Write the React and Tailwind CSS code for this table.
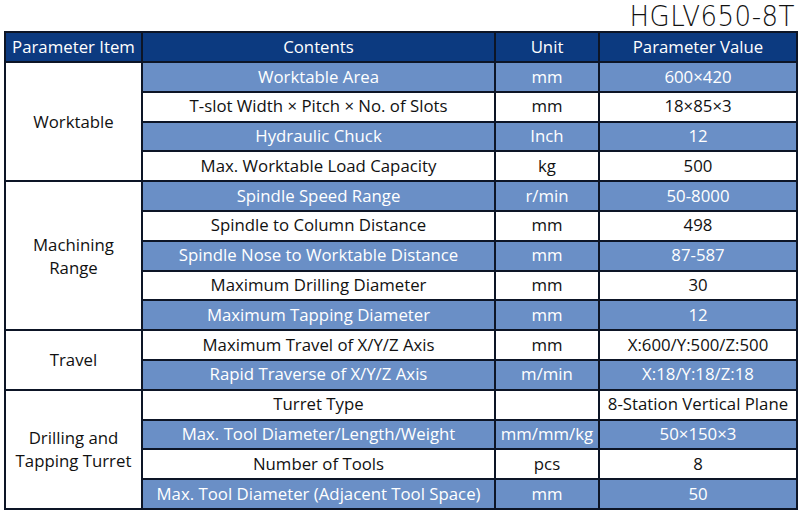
const groups = [
  {
    label: ["Worktable"],
    rows: [
      ["Worktable Area", "mm", "600×420"],
      ["T-slot Width × Pitch × No. of Slots", "mm", "18×85×3"],
      ["Hydraulic Chuck", "Inch", "12"],
      ["Max. Worktable Load Capacity", "kg", "500"],
    ],
  },
  {
    label: ["Machining", "Range"],
    rows: [
      ["Spindle Speed Range", "r/min", "50-8000"],
      ["Spindle to Column Distance", "mm", "498"],
      ["Spindle Nose to Worktable Distance", "mm", "87-587"],
      ["Maximum Drilling Diameter", "mm", "30"],
      ["Maximum Tapping Diameter", "mm", "12"],
    ],
  },
  {
    label: ["Travel"],
    rows: [
      ["Maximum Travel of X/Y/Z Axis", "mm", "X:600/Y:500/Z:500"],
      ["Rapid Traverse of X/Y/Z Axis", "m/min", "X:18/Y:18/Z:18"],
    ],
  },
  {
    label: ["Drilling and", "Tapping Turret"],
    rows: [
      ["Turret Type", "", "8-Station Vertical Plane"],
      ["Max. Tool Diameter/Length/Weight", "mm/mm/kg", "50×150×3"],
      ["Number of Tools", "pcs", "8"],
      ["Max. Tool Diameter (Adjacent Tool Space)", "mm", "50"],
    ],
  },
];

export default function App() {
  let index = 0;
  return (
    <div className="h-[512px] w-[800px] bg-white font-['Open_Sans','Noto_Sans',sans-serif] text-[16.8px] leading-none">
      <div className="flex h-[31px] items-start justify-end pr-[5px] pt-[3px]">
        <span className="origin-right font-['DejaVu_Sans',sans-serif] text-[28px] font-extralight leading-none tracking-[0.5px] text-[#111] [transform:scaleX(0.93)]">
          HGLV650-8T
        </span>
      </div>
      <table className="ml-[4px] w-[792px] table-fixed border-collapse text-center">
        <colgroup>
          <col className="w-[137px]" />
          <col className="w-[353px]" />
          <col className="w-[104px]" />
          <col className="w-[198px]" />
        </colgroup>
        <thead>
          <tr className="h-[30px] bg-[#0c3a80] text-white">
            <th className="border-2 border-[#0d1526] font-normal">Parameter Item</th>
            <th className="border-2 border-[#0d1526] font-normal">Contents</th>
            <th className="border-2 border-[#0d1526] font-normal">Unit</th>
            <th className="border-2 border-[#0d1526] font-normal">Parameter Value</th>
          </tr>
        </thead>
        <tbody>
          {groups.map((group) =>
            group.rows.map((row, i) => {
              const blue = index++ % 2 === 0;
              const cell = `border-2 border-[#0d1526] whitespace-nowrap ${
                blue ? "bg-[#6a8fc6] text-white" : "bg-white text-[#111]"
              }`;
              return (
                <tr key={row[0]} className="h-[29.8px]">
                  {i === 0 && (
                    <td rowSpan={group.rows.length} className="border-2 border-[#0d1526] bg-white text-[#111] leading-[23px]">
                      {group.label.map((line) => (
                        <div key={line}>{line}</div>
                      ))}
                    </td>
                  )}
                  <td className={cell}>{row[0]}</td>
                  <td className={cell}>{row[1]}</td>
                  <td className={cell}>{row[2]}</td>
                </tr>
              );
            })
          )}
        </tbody>
      </table>
    </div>
  );
}
